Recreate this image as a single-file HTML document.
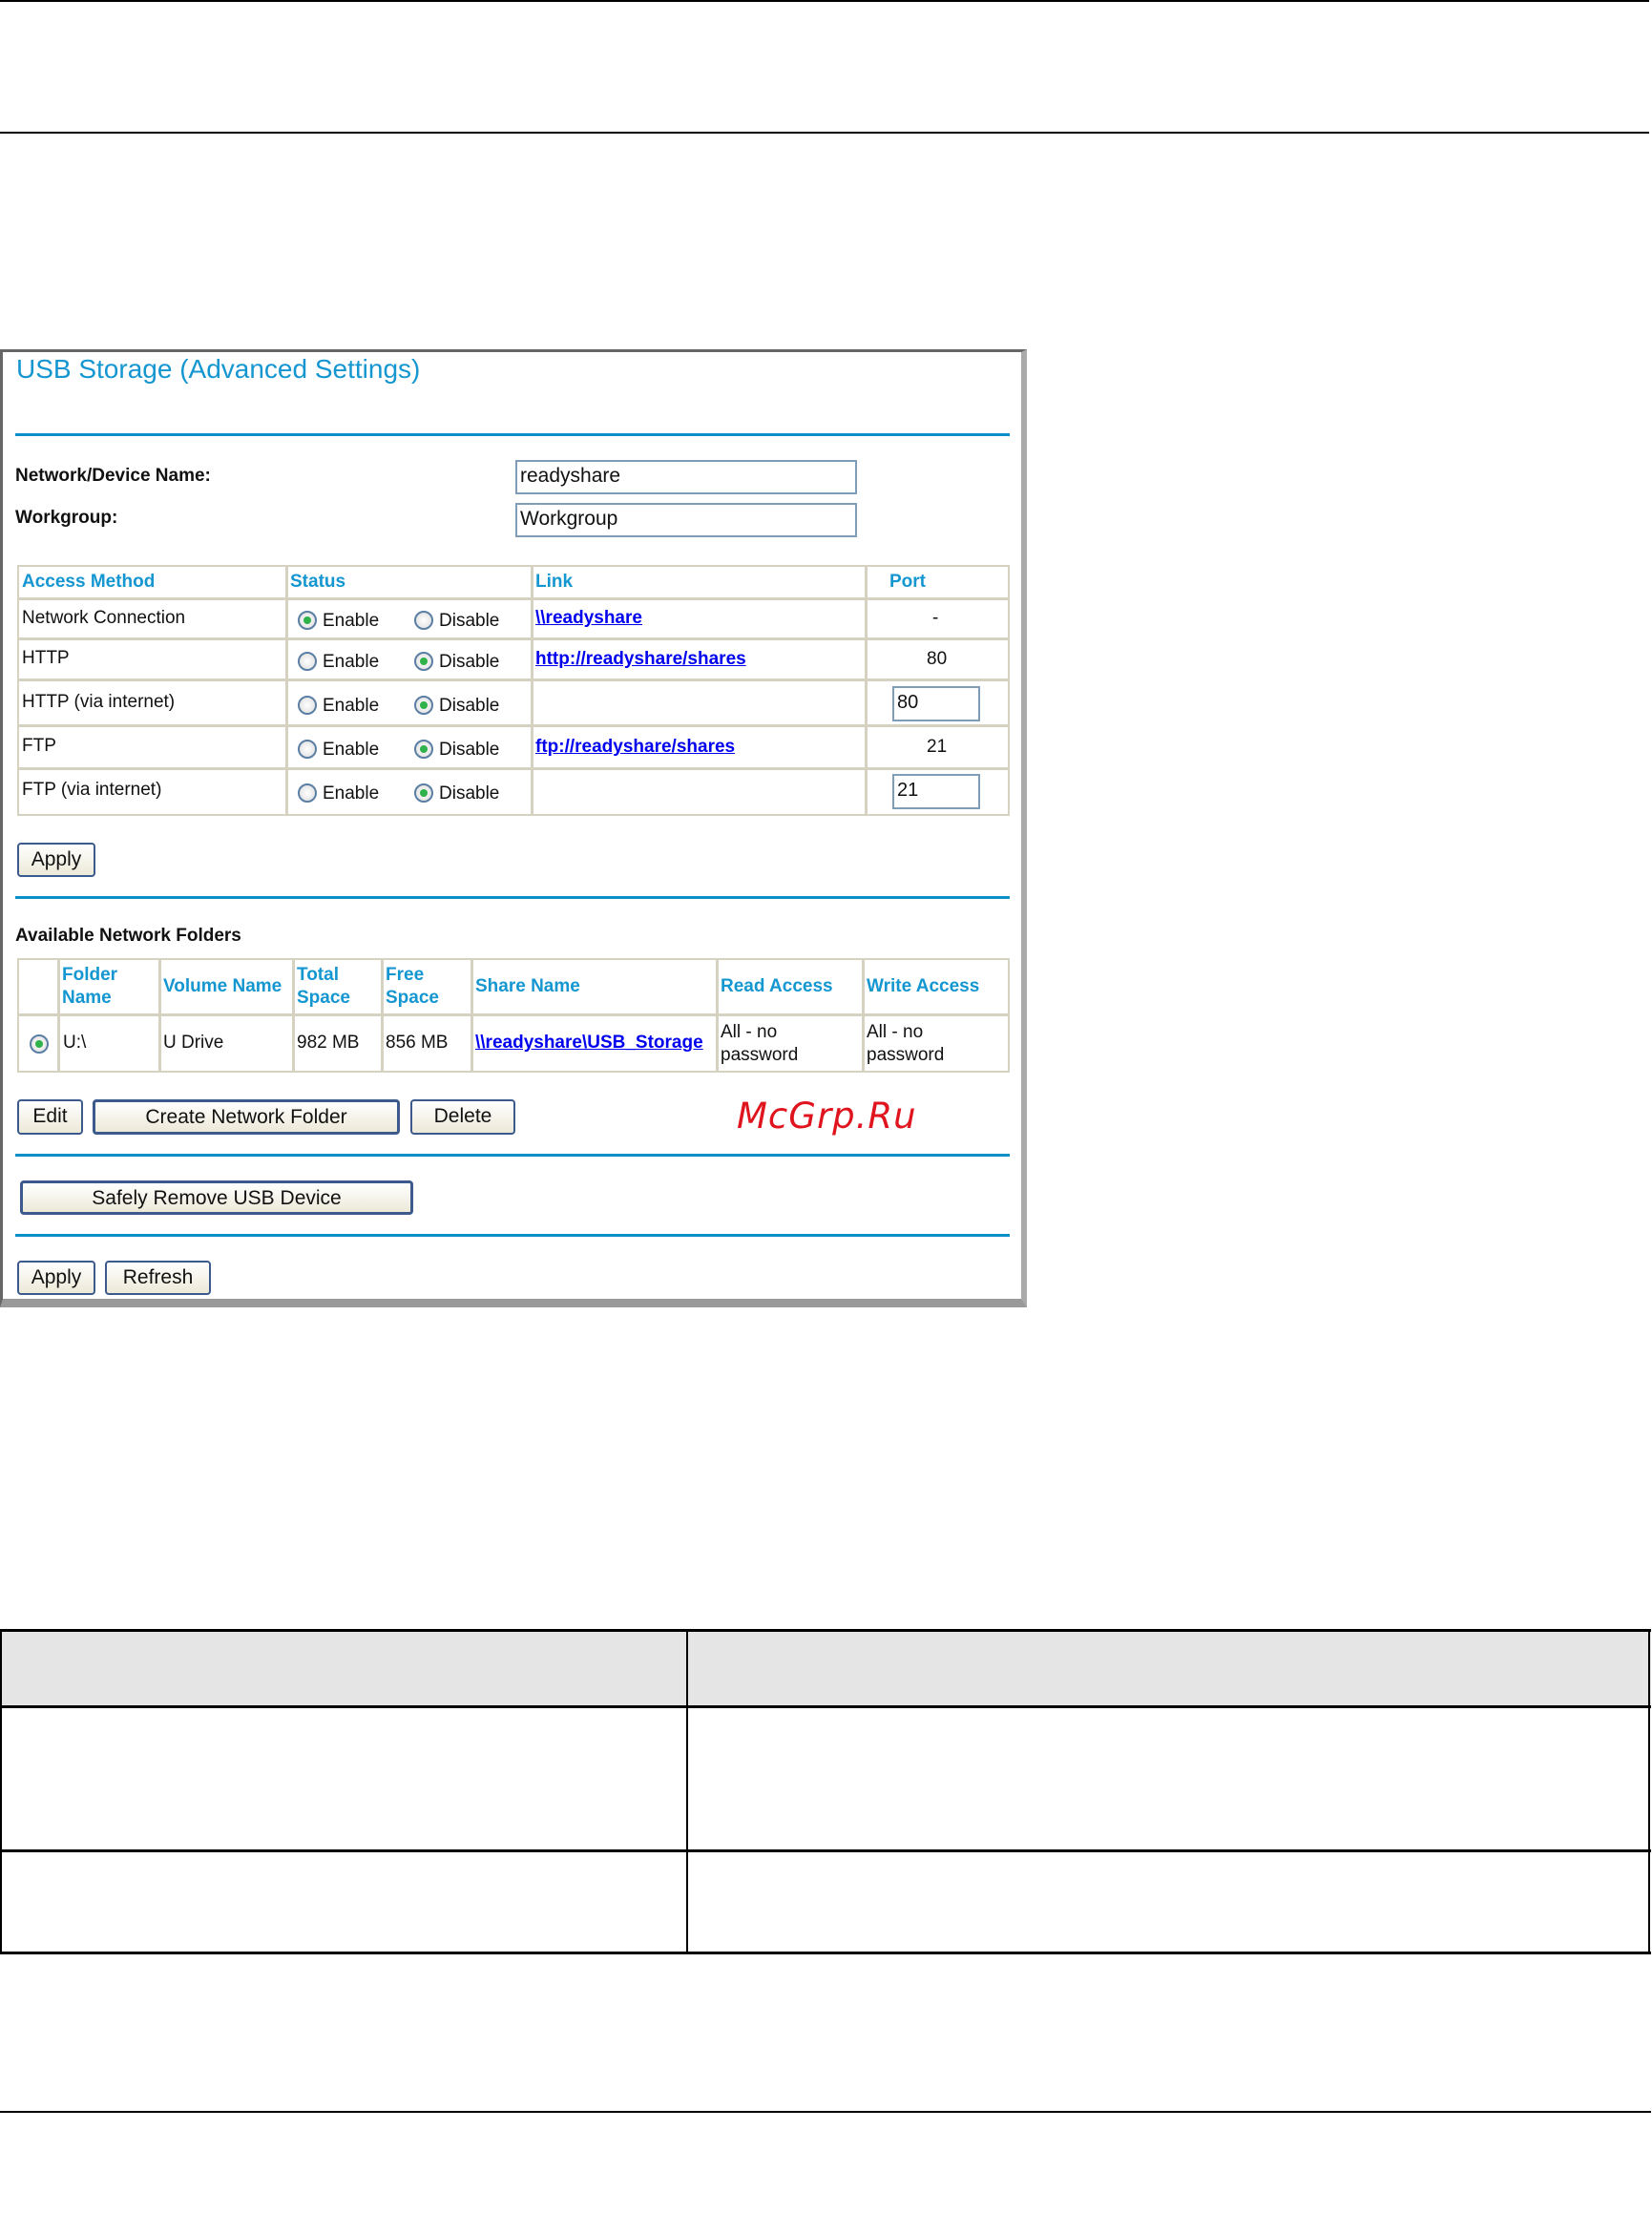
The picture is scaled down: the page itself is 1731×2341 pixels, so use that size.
<!DOCTYPE html>
<html><head><meta charset="utf-8"><style>
*{margin:0;padding:0;box-sizing:border-box}
body{width:1731px;height:2341px;background:#fff;position:relative;overflow:hidden;font-family:"Liberation Sans",Arial,sans-serif;color:#111}
.a{position:absolute;white-space:nowrap}
.hl{position:absolute;background:#0a8fc8;height:3px}
.blk{position:absolute;background:#000}
.t{font-size:19px}
.b{font-weight:bold;font-size:19px}
.h{color:#1496d0;font-weight:bold;font-size:19px}
.lnk{color:#0000ee;text-decoration:underline;font-weight:bold;font-size:19px}
.inp{position:absolute;border:2px solid #7f9db9;background:#fff;font-size:21px;padding-left:3px;line-height:30px}
.btn{position:absolute;border:2px solid #3c5a8c;border-radius:4px;background:linear-gradient(#fff,#ece9d8);font-size:21px;text-align:center;line-height:31px}
.r{position:absolute;width:20px;height:20px;border-radius:50%;border:2px solid #5b7fa4;background:radial-gradient(#fff,#dcdcdc)}
.r.on::after{content:"";position:absolute;left:4px;top:4px;width:8px;height:8px;border-radius:50%;background:#2fb24a}
.c{position:absolute;border:2px solid #d6d2c2}
</style></head><body>
<div class="blk" style="left:0;top:0;width:1728px;height:2px"></div>
<div class="blk" style="left:0;top:138px;width:1728px;height:2px"></div>

<div style="position:absolute;left:0;top:366px;width:1076px;height:1004px;border-left:3px solid #666;border-top:3px solid #666;border-right:6px solid #aaa;border-bottom:9px solid #999"></div>
<div class="a" style="left:17px;top:371px;font-size:28px;color:#1496d0">USB Storage (Advanced Settings)</div>
<div class="hl" style="left:16px;top:454px;width:1042px"></div>
<div class="a b" style="left:16px;top:488px">Network/Device Name:</div>
<div class="a b" style="left:16px;top:532px">Workgroup:</div>
<div class="inp" style="left:540px;top:482px;width:358px;height:36px">readyshare</div>
<div class="inp" style="left:540px;top:527px;width:358px;height:36px">Workgroup</div>

<div class="c" style="left:18px;top:592px;width:1040px;height:263px"></div>
<div class="c" style="left:18px;top:592px;width:1040px;height:37px;border-width:0 0 3px 0"></div>
<div class="c" style="left:18px;top:668px;width:1040px;height:0;border-width:3px 0 0 0"></div>
<div class="c" style="left:18px;top:711px;width:1040px;height:0;border-width:3px 0 0 0"></div>
<div class="c" style="left:18px;top:759px;width:1040px;height:0;border-width:3px 0 0 0"></div>
<div class="c" style="left:18px;top:804px;width:1040px;height:0;border-width:3px 0 0 0"></div>
<div class="c" style="left:299px;top:592px;width:0;height:263px;border-width:0 0 0 3px"></div>
<div class="c" style="left:556px;top:592px;width:0;height:263px;border-width:0 0 0 3px"></div>
<div class="c" style="left:906px;top:592px;width:0;height:263px;border-width:0 0 0 3px"></div>
<div class="a h" style="left:23px;top:599px">Access Method</div>
<div class="a h" style="left:304px;top:599px">Status</div>
<div class="a h" style="left:561px;top:599px">Link</div>
<div class="a h" style="left:932px;top:599px">Port</div>

<div class="a t" style="left:23px;top:637px">Network Connection</div>
<div class="a t" style="left:23px;top:679px">HTTP</div>
<div class="a t" style="left:23px;top:725px">HTTP (via internet)</div>
<div class="a t" style="left:23px;top:771px">FTP</div>
<div class="a t" style="left:23px;top:817px">FTP (via internet)</div>

<div class="r on" style="left:312px;top:640px"></div><div class="a t" style="left:338px;top:640px">Enable</div>
<div class="r" style="left:434px;top:640px"></div><div class="a t" style="left:460px;top:640px">Disable</div>
<div class="r" style="left:312px;top:683px"></div><div class="a t" style="left:338px;top:683px">Enable</div>
<div class="r on" style="left:434px;top:683px"></div><div class="a t" style="left:460px;top:683px">Disable</div>
<div class="r" style="left:312px;top:729px"></div><div class="a t" style="left:338px;top:729px">Enable</div>
<div class="r on" style="left:434px;top:729px"></div><div class="a t" style="left:460px;top:729px">Disable</div>
<div class="r" style="left:312px;top:775px"></div><div class="a t" style="left:338px;top:775px">Enable</div>
<div class="r on" style="left:434px;top:775px"></div><div class="a t" style="left:460px;top:775px">Disable</div>
<div class="r" style="left:312px;top:821px"></div><div class="a t" style="left:338px;top:821px">Enable</div>
<div class="r on" style="left:434px;top:821px"></div><div class="a t" style="left:460px;top:821px">Disable</div>

<div class="a lnk" style="left:561px;top:637px">\\readyshare</div>
<div class="a lnk" style="left:561px;top:680px">http://readyshare/shares</div>
<div class="a lnk" style="left:561px;top:772px">ftp://readyshare/shares</div>
<div class="a t" style="left:977px;top:637px">-</div>
<div class="a t" style="left:971px;top:680px">80</div>
<div class="a t" style="left:971px;top:772px">21</div>
<div class="inp" style="left:935px;top:719px;width:92px;height:37px;font-size:20px">80</div>
<div class="inp" style="left:935px;top:811px;width:92px;height:37px;font-size:20px">21</div>

<div class="btn" style="left:18px;top:883px;width:82px;height:36px">Apply</div>
<div class="hl" style="left:16px;top:939px;width:1042px"></div>
<div class="a b" style="left:16px;top:970px">Available Network Folders</div>

<div class="c" style="left:18px;top:1004px;width:1040px;height:120px"></div>
<div class="c" style="left:18px;top:1062px;width:1040px;height:0;border-width:3px 0 0 0"></div>
<div class="c" style="left:60px;top:1004px;width:0;height:120px;border-width:0 0 0 3px"></div>
<div class="c" style="left:166px;top:1004px;width:0;height:120px;border-width:0 0 0 3px"></div>
<div class="c" style="left:306px;top:1004px;width:0;height:120px;border-width:0 0 0 3px"></div>
<div class="c" style="left:399px;top:1004px;width:0;height:120px;border-width:0 0 0 3px"></div>
<div class="c" style="left:493px;top:1004px;width:0;height:120px;border-width:0 0 0 3px"></div>
<div class="c" style="left:750px;top:1004px;width:0;height:120px;border-width:0 0 0 3px"></div>
<div class="c" style="left:903px;top:1004px;width:0;height:120px;border-width:0 0 0 3px"></div>
<div class="a h" style="left:65px;top:1010px;line-height:24px">Folder<br>Name</div>
<div class="a h" style="left:171px;top:1023px">Volume Name</div>
<div class="a h" style="left:311px;top:1010px;line-height:24px">Total<br>Space</div>
<div class="a h" style="left:404px;top:1010px;line-height:24px">Free<br>Space</div>
<div class="a h" style="left:498px;top:1023px">Share Name</div>
<div class="a h" style="left:755px;top:1023px">Read Access</div>
<div class="a h" style="left:908px;top:1023px">Write Access</div>
<div class="r on" style="left:31px;top:1084px"></div>
<div class="a t" style="left:66px;top:1082px">U:\</div>
<div class="a t" style="left:171px;top:1082px">U Drive</div>
<div class="a t" style="left:311px;top:1082px">982 MB</div>
<div class="a t" style="left:404px;top:1082px">856 MB</div>
<div class="a lnk" style="left:498px;top:1082px">\\readyshare\USB_Storage</div>
<div class="a t" style="left:755px;top:1070px;line-height:24px">All - no<br>password</div>
<div class="a t" style="left:908px;top:1070px;line-height:24px">All - no<br>password</div>

<div class="btn" style="left:18px;top:1152px;width:69px;height:37px">Edit</div>
<div class="btn" style="left:97px;top:1152px;width:322px;height:37px;border-width:3px">Create Network Folder</div>
<div class="btn" style="left:430px;top:1152px;width:110px;height:37px">Delete</div>
<div class="a" style="left:772px;top:1148px;font-family:'DejaVu Sans',sans-serif;font-size:37px;color:#e0141e;font-style:oblique;letter-spacing:1px">McGrp.Ru</div>
<div class="hl" style="left:16px;top:1209px;width:1042px"></div>
<div class="btn" style="left:21px;top:1237px;width:412px;height:36px;border-width:3px">Safely Remove USB Device</div>
<div class="hl" style="left:16px;top:1293px;width:1042px"></div>
<div class="btn" style="left:18px;top:1321px;width:82px;height:36px">Apply</div>
<div class="btn" style="left:110px;top:1321px;width:111px;height:36px">Refresh</div>

<div style="position:absolute;left:0;top:1707px;width:1730px;height:81px;background:#e5e5e5"></div>
<div class="blk" style="left:0;top:1707px;width:1730px;height:3px"></div>
<div class="blk" style="left:0;top:1787px;width:1730px;height:3px"></div>
<div class="blk" style="left:0;top:1938px;width:1730px;height:3px"></div>
<div class="blk" style="left:0;top:2045px;width:1730px;height:3px"></div>
<div class="blk" style="left:0;top:1707px;width:2px;height:341px"></div>
<div class="blk" style="left:719px;top:1707px;width:2px;height:341px"></div>
<div class="blk" style="left:1727px;top:1707px;width:2px;height:341px"></div>
<div class="blk" style="left:0;top:2212px;width:1730px;height:2px"></div>
</body></html>
